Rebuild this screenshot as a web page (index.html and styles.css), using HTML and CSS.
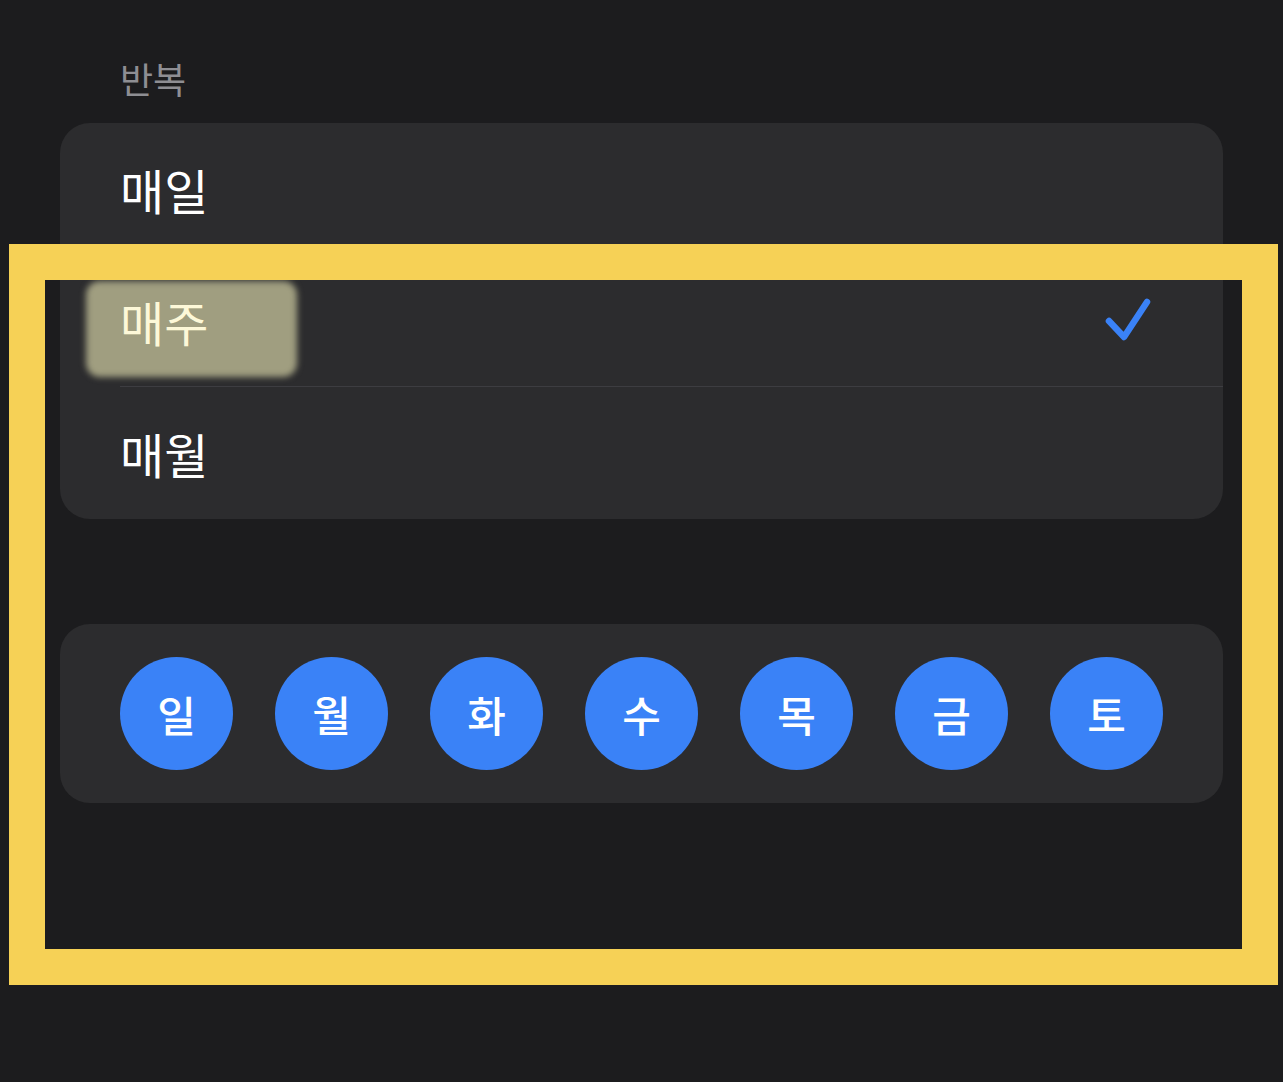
FILE: index.html
```html
<html>

<head>
  <meta name="viewport" content="width=device-width, initial-scale=1">
  <link rel="stylesheet" href="styles.css">
</head>

<body>
  <div class="page">
    <div class="label">반복</div>

    <div class="card list">
      <div class="row">
        <div class="row-body">매일</div>
      </div>
      <div class="row">
        <div class="marker"></div>
        <div class="row-body">
          <span class="marked">매주</span>
          <svg class="check" width="56" height="56" viewBox="0 0 56 56">
            <polyline points="7,26 22,42 45,7" fill="none" stroke="#3a82f7" stroke-width="6.5"
              stroke-linecap="round" stroke-linejoin="round" />
          </svg>
        </div>
      </div>
      <div class="row">
        <div class="row-body">매월</div>
      </div>
    </div>

    <div class="card days">
      <div class="day">일</div>
      <div class="day">월</div>
      <div class="day">화</div>
      <div class="day">수</div>
      <div class="day">목</div>
      <div class="day">금</div>
      <div class="day">토</div>
    </div>
  </div>

  <div class="frame"></div>
</body>

</html>
```

FILE: styles.css
```css
body {
  margin: 0;
  background-color: #1c1c1e;
  font-family: "Noto Sans CJK KR", "Noto Sans", sans-serif;
  color: #fff;
  height: 1082px;
  overflow: hidden;
}

.page {
  padding: 0 60px;
}

.label {
  padding: 58px 0 0 60px;
  margin-bottom: 25px;
  font-size: 36px;
  line-height: 40px;
  color: #8e8e93;
}

.card {
  background-color: #2c2c2e;
  border-radius: 30px;
}

.row {
  position: relative;
  padding-left: 60px;
}

.row-body {
  position: relative;
  height: 132px;
  display: flex;
  align-items: center;
  justify-content: space-between;
  padding-right: 65px;
  font-size: 48px;
  border-bottom: 1px solid #3d3d41;
  box-sizing: border-box;
}

.row:last-child .row-body {
  border-bottom: none;
}

.marker {
  position: absolute;
  left: 26px;
  top: 26px;
  width: 211px;
  height: 96px;
  background-color: #a09e80;
  border-radius: 14px;
  filter: blur(3px);
}

.marked {
  color: #fdf8d8;
}

.check {
  margin-top: 4px;
}

.days {
  margin-top: 105px;
  padding: 33px 60px;
  display: flex;
  justify-content: space-between;
}

.day {
  width: 113px;
  height: 113px;
  border-radius: 50%;
  background-color: #3a82f7;
  display: flex;
  align-items: center;
  justify-content: center;
  font-size: 42px;
  font-weight: 500;
}

.frame {
  position: absolute;
  left: 9px;
  top: 244px;
  width: 1269px;
  height: 741px;
  border: 36px solid #f6d156;
  box-sizing: border-box;
}
```
